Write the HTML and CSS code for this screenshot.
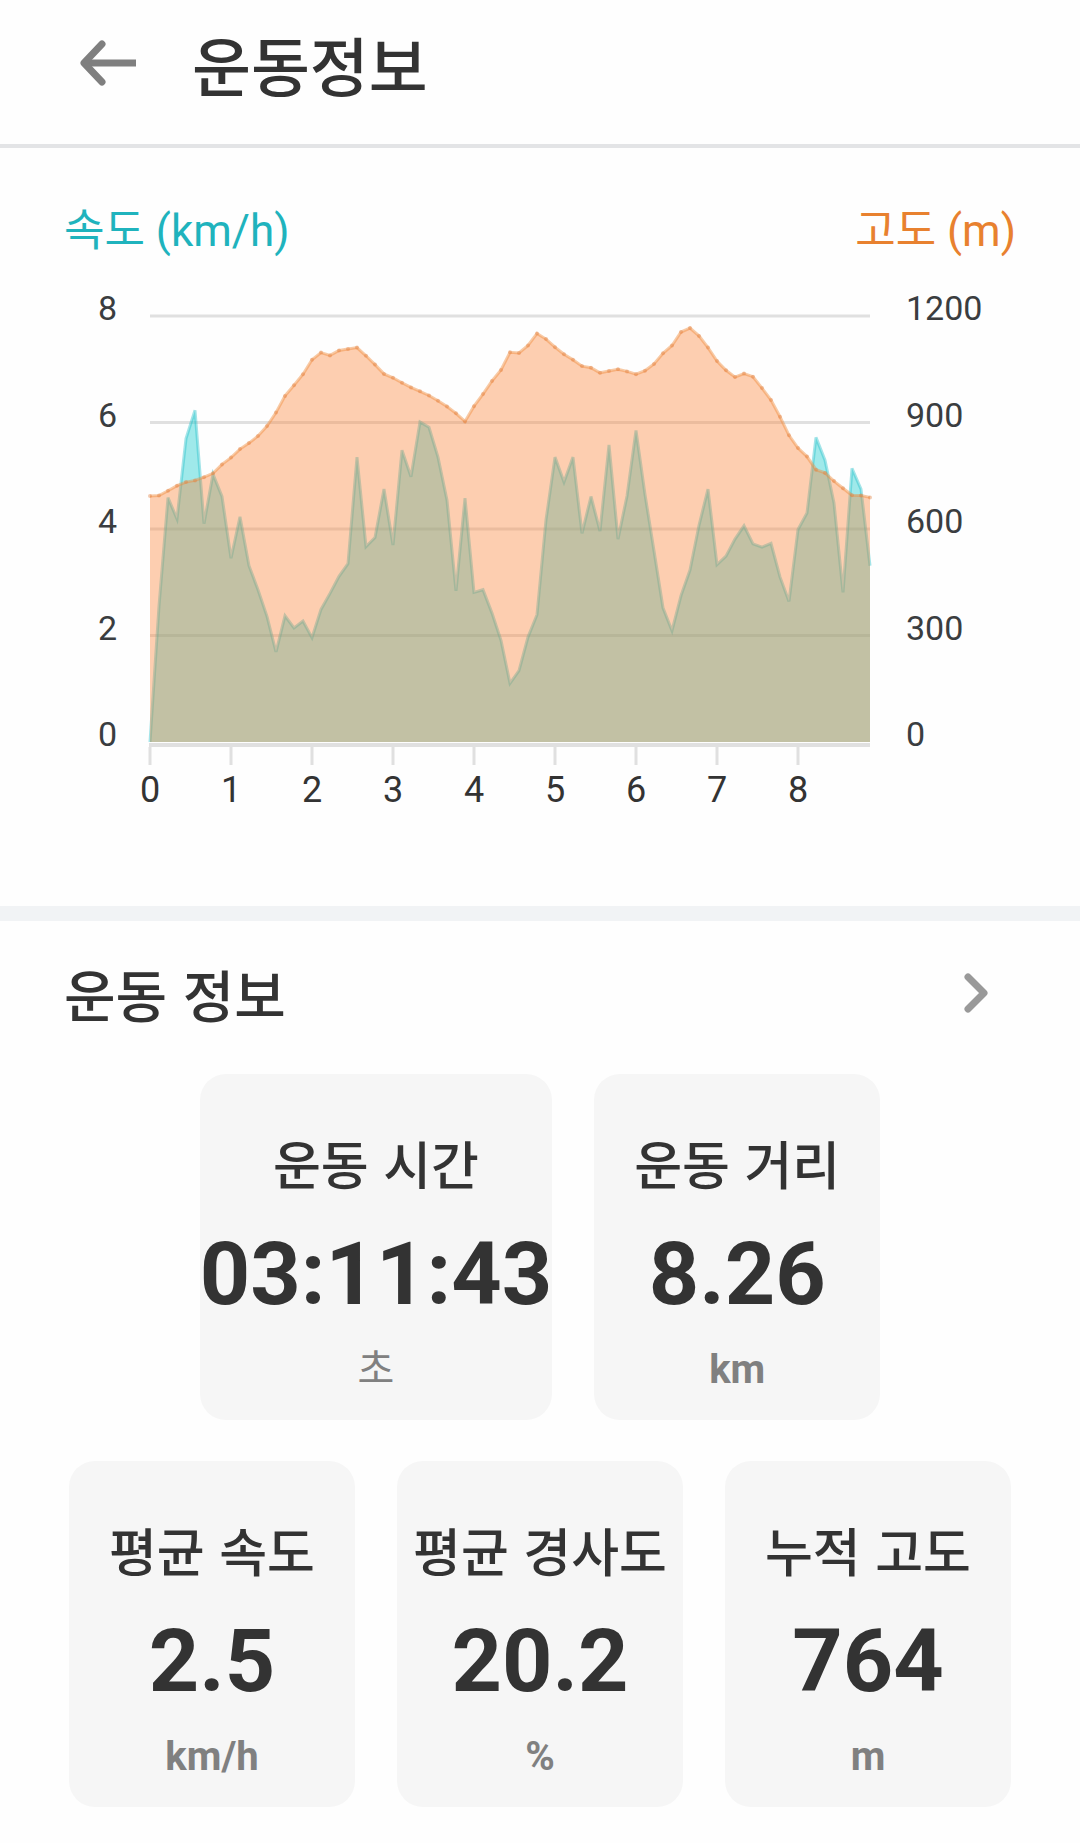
FILE: index.html
```html
<!DOCTYPE html>
<html lang="ko">

<head>
    <meta charset="UTF-8">
    <meta name="viewport" content="width=device-width, initial-scale=1.0">
    <title>운동정보</title>
    <link rel="stylesheet" href="styles.css">
</head>

<body>
    <header class="top-bar">
        <button type="button" class="back-btn" aria-label="뒤로">
            <svg viewBox="0 0 56 48" width="56" height="48">
                <path d="M56 24H5" />
                <path d="M22 5L4 24L22 43" stroke-linecap="round" />
            </svg>
        </button>
        <h1>운동정보</h1>
    </header>

    <main>
        <section class="chart-section">
            <div class="legend">
                <span class="legend-speed">속도 (km/h)</span>
                <span class="legend-height">고도 (m)</span>
            </div>
            <svg class="chart" viewBox="0 0 1080 560" role="img" aria-label="속도와 고도 그래프">
                <g id="grid"></g>
                <g id="areas"></g>
                <g id="labels"></g>
            </svg>
        </section>

        <section class="info-section">
            <div class="info-head">
                <h2>운동 정보</h2>
                <button type="button" class="more-btn" aria-label="더보기">
                    <svg viewBox="0 0 24 40" width="24" height="40">
                        <path d="M4 4L20 20L4 36" />
                    </svg>
                </button>
            </div>

            <ul class="cards">
                <li class="card">
                    <h3>운동 시간</h3>
                    <p class="value">03:11:43</p>
                    <p class="unit unit-ko">초</p>
                </li>
                <li class="card">
                    <h3>운동 거리</h3>
                    <p class="value">8.26</p>
                    <p class="unit">km</p>
                </li>
                <li class="card">
                    <h3>평균 속도</h3>
                    <p class="value">2.5</p>
                    <p class="unit">km/h</p>
                </li>
                <li class="card">
                    <h3>평균 경사도</h3>
                    <p class="value">20.2</p>
                    <p class="unit">%</p>
                </li>
                <li class="card">
                    <h3>누적 고도</h3>
                    <p class="value">764</p>
                    <p class="unit">m</p>
                </li>
            </ul>
        </section>
    </main>

    <script src="chart.js"></script>
</body>

</html>
```
FILE: styles.css
```css
* {
    box-sizing: border-box;
}

body {
    margin: 0;
    background-color: #fefefe;
    color: #333;
    font-family: Roboto, "Noto Sans CJK KR", sans-serif;
}

h1,
h2,
h3,
p,
ul {
    margin: 0;
    padding: 0;
}

h1,
h2,
h3 {
    font-family: "Noto Sans CJK KR", sans-serif;
    font-weight: 500;
}

button {
    padding: 0;
    border: none;
    background: none;
    cursor: pointer;
}

button svg {
    display: block;
    fill: none;
    stroke-linejoin: round;
}

/* header */
.top-bar {
    display: flex;
    align-items: center;
    gap: 56px;
    height: 148px;
    padding: 0 80px 18px;
    border-bottom: 4px solid #e3e4e6;
}

.top-bar h1 {
    font-size: 64px;
    line-height: 80px;
}

.back-btn svg {
    stroke: #7f7f7f;
    stroke-width: 7;
}

/* chart */
.chart-section {
    padding: 53px 0 85px;
    border-bottom: 15px solid #f1f3f5;
}

.legend {
    display: flex;
    justify-content: space-between;
    padding: 0 64px;
    font-size: 44px;
    line-height: 60px;
}

.legend-speed {
    color: #1fb3bd;
}

.legend-height {
    color: #e8812f;
}

.chart {
    display: block;
    width: 100%;
}

.grid-line {
    stroke: #e0e0e0;
    stroke-width: 3;
}

.axis-line {
    stroke: #e0e0e0;
    stroke-width: 4;
}

.speed-area {
    fill: rgba(17, 202, 204, 0.4);
}

.speed-line {
    fill: none;
    stroke: rgba(30, 190, 200, 0.4);
    stroke-width: 3;
}

.height-area {
    fill: rgba(252, 129, 50, 0.38);
}

.height-line {
    fill: none;
    stroke: rgba(240, 140, 60, 0.45);
    stroke-width: 3;
}

.height-dot {
    fill: rgba(225, 125, 60, 0.4);
}

.y-label {
    fill: #3a3d40;
    font-size: 34px;
}

.x-label {
    fill: #333;
    font-size: 36px;
    text-anchor: middle;
}

/* workout info */
.info-section {
    padding: 32px 64px 36px;
}

.info-head {
    display: flex;
    justify-content: space-between;
    align-items: center;
    padding-right: 28px;
    margin-bottom: 41px;
}

.info-head h2 {
    font-size: 56px;
    line-height: 80px;
}

.more-btn svg {
    stroke: #999;
    stroke-width: 7;
    stroke-linecap: round;
}

.cards {
    display: flex;
    flex-wrap: wrap;
    justify-content: center;
    gap: 41px 42px;
    list-style: none;
}

.card {
    min-width: 286px;
    padding: 59px 0 26px;
    border-radius: 26px;
    background-color: #f6f6f6;
    text-align: center;
}

.card h3 {
    font-size: 52px;
    line-height: 60px;
}

.value {
    margin-top: 33px;
    font-size: 88px;
    font-weight: 700;
    line-height: 96px;
}

.unit {
    margin-top: 24px;
    color: #808080;
    font-size: 40px;
    font-weight: 700;
    line-height: 48px;
}

.unit-ko {
    font-weight: 400;
}
```
FILE: chart.js
```javascript
const speed = [
    0, 2.55, 4.59, 4.19, 5.7, 6.23, 4.1, 5.03, 4.61, 3.45,
    4.23, 3.31, 2.86, 2.36, 1.69, 2.37, 2.14, 2.27, 1.96, 2.49,
    2.79, 3.11, 3.35, 5.35, 3.67, 3.84, 4.75, 3.7, 5.48, 4.98,
    6.01, 5.91, 5.35, 4.54, 2.84, 4.58, 2.81, 2.86, 2.42, 1.91,
    1.1, 1.34, 1.97, 2.39, 4.17, 5.35, 4.88, 5.35, 3.92, 4.61,
    3.96, 5.58, 3.81, 4.62, 5.85, 4.65, 3.59, 2.52, 2.09, 2.75,
    3.23, 4.07, 4.75, 3.33, 3.49, 3.81, 4.06, 3.72, 3.66, 3.73,
    3.1, 2.64, 3.99, 4.3, 5.72, 5.29, 4.49, 2.81, 5.14, 4.75,
    3.31
];

const height = [
    693, 694, 708, 722, 732, 737, 746, 757, 782, 801,
    825, 842, 862, 890, 928, 975, 1005, 1036, 1077, 1097,
    1089, 1103, 1107, 1111, 1088, 1063, 1037, 1026, 1012, 999,
    988, 976, 961, 945, 926, 903, 946, 980, 1017, 1048,
    1098, 1096, 1117, 1151, 1135, 1112, 1092, 1077, 1059, 1054,
    1040, 1045, 1050, 1044, 1036, 1046, 1065, 1095, 1117, 1155,
    1166, 1144, 1111, 1073, 1047, 1028, 1038, 1029, 997, 963,
    916, 864, 828, 804, 767, 758, 735, 715, 695, 694,
    689
];

// plot box inside the svg
const left = 150;
const right = 870;
const top_ = 55;
const bottom = 481;

const step = (right - left) / (speed.length - 1);

function getPoints(data, max) {
    return data.map((value, i) => {
        const y = bottom - value / max * (bottom - top_);
        return [left + i * step, Math.round(y * 10) / 10];
    });
}

function drawGrid() {
    let html = "";

    for (let i = 1; i <= 4; i++) {
        const y = bottom - i * (bottom - top_) / 4;
        html += `<line class="grid-line" x1="${left}" y1="${y}" x2="${right}" y2="${y}" />`;
    }

    html += `<line class="axis-line" x1="${left - 1}" y1="${bottom + 3}" x2="${right}" y2="${bottom + 3}" />`;

    for (let km = 0; km <= 8; km++) {
        const x = left + km * step * 9;
        html += `<line class="grid-line" x1="${x}" y1="${bottom + 5}" x2="${x}" y2="${bottom + 23}" />`;
    }

    document.getElementById("grid").innerHTML = html;
}

function drawArea(points, name) {
    const line = points.map(p => p.join(",")).join(" ");
    return `
        <polygon class="${name}-area" points="${left},${bottom} ${line} ${right},${bottom}" />
        <polyline class="${name}-line" points="${line}" />
    `;
}

function drawLabels() {
    let html = "";

    for (let i = 0; i <= 4; i++) {
        const y = bottom - i * (bottom - top_) / 4 + 4;
        html += `<text class="y-label" x="98" y="${y}">${i * 2}</text>`;
        html += `<text class="y-label" x="906" y="${y}">${i * 300}</text>`;
    }

    for (let km = 0; km <= 8; km++) {
        html += `<text class="x-label" x="${left + km * step * 9}" y="541">${km}</text>`;
    }

    document.getElementById("labels").innerHTML = html;
}

const heightPoints = getPoints(height, 1200);
const dots = heightPoints.map(p => `<circle class="height-dot" cx="${p[0]}" cy="${p[1]}" r="2" />`).join("");

drawGrid();
document.getElementById("areas").innerHTML = drawArea(getPoints(speed, 8), "speed") + drawArea(heightPoints, "height") + dots;
drawLabels();
```
